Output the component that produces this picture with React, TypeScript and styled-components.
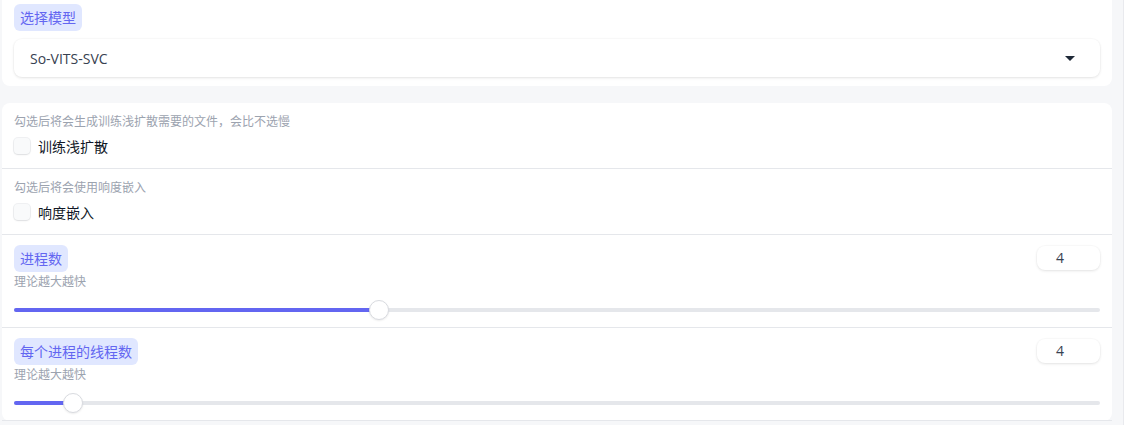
import styled, { createGlobalStyle } from "styled-components";

const GlobalStyle = createGlobalStyle`
  html, body {
    margin: 0;
    padding: 0;
    background: #ffffff;
  }
  body {
    font-family: "Open Sans", "Noto Sans CJK SC", sans-serif;
    overflow: hidden;
  }
`;

const Page = styled.div`
  width: 1121px;
  height: 425px;
  background: #f6f7f9;
  border-right: 1px solid #e9eaee;
  padding: 0 0 0 2px;
  display: flex;
  flex-direction: column;
  gap: 17px;
  overflow: hidden;
`;

const Card = styled.section<{ $cut?: boolean }>`
  width: 1110px;
  background: #ffffff;
  border-radius: 8px;
  margin-top: ${p => (p.$cut ? "-10px" : "0")};
  display: flex;
  flex-direction: column;
`;

const ModelBlock = styled.div`
  padding: 14px 12px 9px;
  display: flex;
  flex-direction: column;
  gap: 8px;
`;

const Pill = styled.span`
  align-self: flex-start;
  background: #e0e7ff;
  color: #6366f1;
  font-size: 14px;
  line-height: 27px;
  padding: 0 6px;
  border-radius: 6px;
  font-family: "Noto Sans CJK SC", sans-serif;
`;

const Select = styled.div`
  height: 38px;
  background: #fff;
  border-radius: 8px;
  box-shadow: 0 1px 3px rgba(0, 0, 0, 0.1), 0 0 0 1px rgba(0, 0, 0, 0.015);
  display: flex;
  align-items: center;
  justify-content: space-between;
  padding: 0 25px 0 16px;
  font-size: 14px;
  color: #374151;
`;

const Caret = styled.span`
  width: 0;
  height: 0;
  border-left: 5px solid transparent;
  border-right: 5px solid transparent;
  border-top: 5px solid #1f2937;
`;

const Row = styled.div<{ $h: number }>`
  height: ${p => p.$h}px;
  box-sizing: border-box;
  border-bottom: 1px solid #e5e7eb;
  padding: 10px 12px 0;
  display: flex;
  flex-direction: column;
`;

const Info = styled.div`
  font-size: 12px;
  line-height: 16px;
  color: #9ca3af;
  font-family: "Noto Sans CJK SC", sans-serif;
`;

const CheckLine = styled.label`
  display: flex;
  align-items: center;
  gap: 8px;
  margin-top: 7px;
  font-size: 14px;
  color: #111827;
  font-family: "Noto Sans CJK SC", sans-serif;
`;

const Box = styled.span`
  width: 16px;
  height: 16px;
  border-radius: 4px;
  background: #f9fafb;
  box-shadow: 0 1px 2px rgba(0, 0, 0, 0.08), 0 0 0 1px #f0f1f3;
`;

const Head = styled.div`
  display: flex;
  justify-content: space-between;
  align-items: flex-start;
`;

const NumberBox = styled.div`
  width: 63px;
  height: 24px;
  margin: 1px 0 0;
  box-sizing: border-box;
  padding-left: 19px;
  border-radius: 8px;
  background: #fff;
  box-shadow: 0 1px 3px rgba(0, 0, 0, 0.1), 0 0 0 1px rgba(0, 0, 0, 0.015);
  font-size: 14px;
  line-height: 24px;
  color: #374151;
`;

const SubInfo = styled(Info)`
  margin-top: 1px;
`;

const Track = styled.div`
  position: relative;
  height: 4px;
  border-radius: 2px;
  background: #e5e7eb;
  margin-top: 19px;
`;

const Fill = styled.div`
  height: 100%;
  border-radius: 2px;
  background: #6366f1;
`;

const Thumb = styled.span`
  position: absolute;
  top: -8px;
  width: 18px;
  height: 18px;
  margin-left: -10px;
  border-radius: 50%;
  background: #fff;
  border: 1px solid #d9dbe0;
  box-shadow: 0 1px 2px rgba(0, 0, 0, 0.08);
`;

const Slider = ({ ratio }: { ratio: number }) => {
  const pos = `calc(10px + ${ratio} * (100% - 20px))`;
  return (
    <Track>
      <Fill style={{ width: pos }} />
      <Thumb style={{ left: pos }} />
    </Track>
  );
};

const checks = [
  { info: "勾选后将会生成训练浅扩散需要的文件，会比不选慢", label: "训练浅扩散" },
  { info: "勾选后将会使用响度嵌入", label: "响度嵌入" },
];

const sliders = [
  { label: "进程数", value: 4, ratio: 0.333 },
  { label: "每个进程的线程数", value: 4, ratio: 0.046 },
];

export default function App() {
  return (
    <>
      <GlobalStyle />
      <Page>
        <Card $cut>
          <ModelBlock>
            <Pill>选择模型</Pill>
            <Select>
              <span>So-VITS-SVC</span>
              <Caret />
            </Select>
          </ModelBlock>
        </Card>
        <Card>
          {checks.map(c => (
            <Row key={c.label} $h={66}>
              <Info>{c.info}</Info>
              <CheckLine>
                <Box />
                {c.label}
              </CheckLine>
            </Row>
          ))}
          {sliders.map(s => (
            <Row key={s.label} $h={93}>
              <Head>
                <Pill>{s.label}</Pill>
                <NumberBox>{s.value}</NumberBox>
              </Head>
              <SubInfo>理论越大越快</SubInfo>
              <Slider ratio={s.ratio} />
            </Row>
          ))}
        </Card>
      </Page>
    </>
  );
}
